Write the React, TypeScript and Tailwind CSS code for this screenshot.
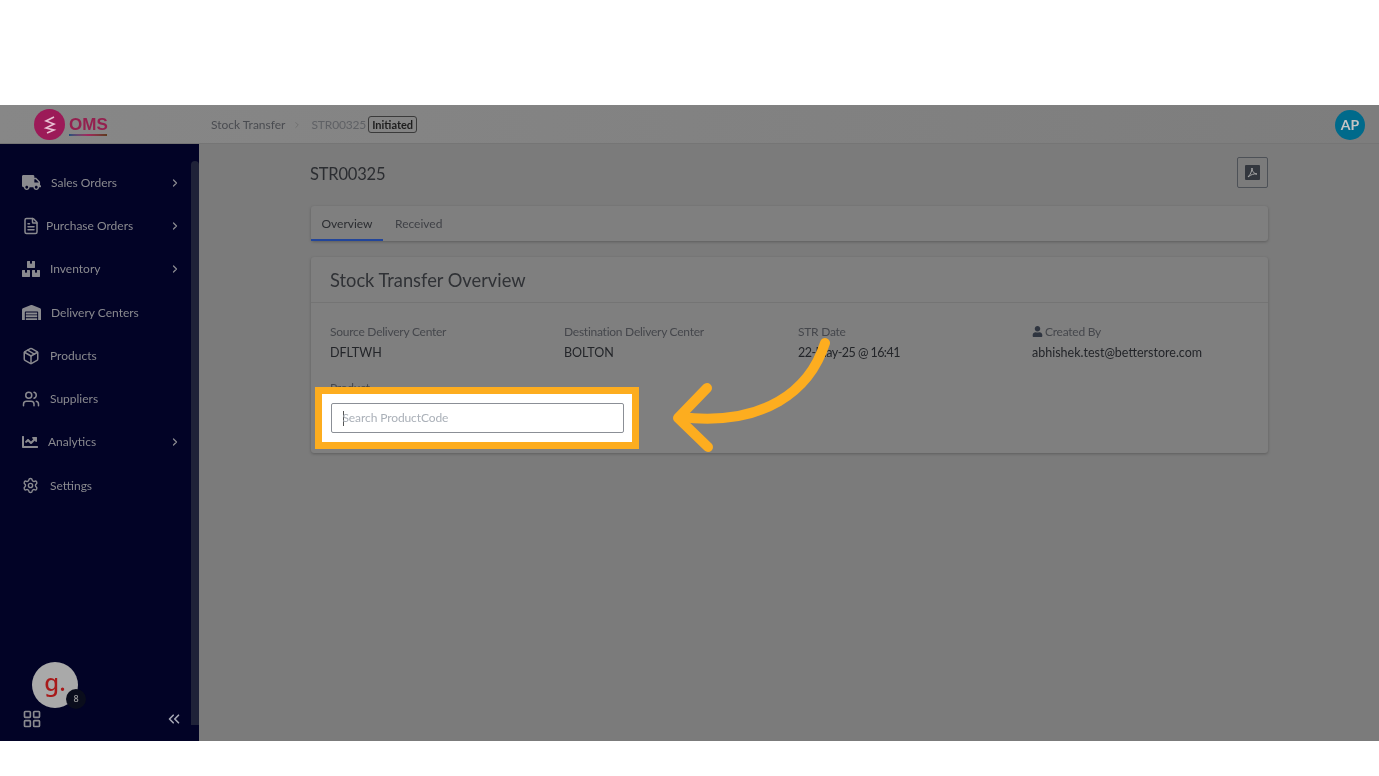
import React from "react";
import { ChevronRight, ChevronsLeft, FileText, LayoutGrid, Package, Settings, Users } from "lucide-react";
import { FaTruck, FaWarehouse, FaUser, FaBoxes, FaChartLine } from "react-icons/fa";

const font = { fontFamily: "Lato, 'Noto Sans', sans-serif" };

type Item = { label: string; icon: React.ReactNode; gap: string; arrow?: boolean };
const items: Item[] = [
  { label: "Sales Orders", icon: <FaTruck size={19} />, gap: "gap-[10px]", arrow: true },
  { label: "Purchase Orders", icon: <FileText size={18} />, gap: "gap-[6px]", arrow: true },
  { label: "Inventory", icon: <FaBoxes size={18} />, gap: "gap-[10px]", arrow: true },
  { label: "Delivery Centers", icon: <FaWarehouse size={19} />, gap: "gap-[10px]" },
  { label: "Products", icon: <Package size={18} />, gap: "gap-[10px]" },
  { label: "Suppliers", icon: <Users size={18} />, gap: "gap-[10px]" },
  { label: "Analytics", icon: <FaChartLine size={16} />, gap: "gap-[10px]", arrow: true },
  { label: "Settings", icon: <Settings size={17} />, gap: "gap-[11px]" },
];

function Detail({ label, value, user, tight }: { label: string; value: string; user?: boolean; tight?: boolean }) {
  return (
    <div className="w-[234px] shrink-0">
      <div className="flex items-center gap-[2px] text-[12px] leading-[17px] tracking-[-0.25px] text-[#45474c]">
        {user && <FaUser size={11} className="text-[#2f3540]" />}
        {label}
      </div>
      <div className={`mt-[4px] text-[12.5px] leading-[18px] text-[#232529] ${tight ? "tracking-[-0.55px]" : ""}`}>{value}</div>
    </div>
  );
}

export default function App() {
  return (
    <div className="relative h-[776px] w-full overflow-hidden bg-white pt-[105px] blur-[0.45px]" style={font}>
      <div className="flex h-[636px] flex-col bg-[#7b7b7b]">
        <header className="flex h-[39px] shrink-0 items-center border-b border-[#757575] bg-gradient-to-r from-[#878787] to-[#7d7d7d] pr-[14px] pt-[1px]">
          <div className="flex w-[211px] shrink-0 items-center pl-[34px]">
            <div className="flex h-[31px] w-[31px] items-center justify-center rounded-full bg-[#9c1a58]">
              <svg width="16" height="20" viewBox="0 0 16 20" fill="none" stroke="#e8c0d2" strokeWidth="1.6">
                <path d="M12 2 L4 6 L12 9 L4 13 L12 15 L5 18" />
              </svg>
            </div>
            <div className="ml-[4px] flex flex-col pt-[2px]">
              <span className="text-[17px] font-black leading-[17px] text-[#94204f]" style={{ fontFamily: "'Liberation Sans', sans-serif" }}>OMS</span>
              <span className="mt-[1px] h-[2px] w-[38px] bg-gradient-to-r from-[#1d4f7c] via-[#a3235c] to-[#5c3a1c]" />
            </div>
          </div>
          <span className="pt-[1px] text-[12px] text-[#4a4c51]">Stock Transfer</span>
          <ChevronRight size={10} className="mx-[7px] text-[#6c6c6c]" />
          <span className="ml-[2px] pt-[1px] text-[12px] tracking-[-0.15px] text-[#5f6165]">STR00325</span>
          <span className="ml-[2px] rounded-[3px] border border-[#3a3a3a] px-[3px] text-[11px] font-bold leading-[15px] text-[#1e1e1e]">Initiated</span>
          <div className="ml-auto flex h-[30px] w-[30px] items-center justify-center rounded-full bg-[#006a8b] text-[14px] font-bold text-[#c4c4c4]">AP</div>
        </header>
        <div className="flex min-h-0 flex-1">
          <aside className="flex w-[199px] shrink-0 bg-[#020326]">
            <div className="flex w-[191px] flex-col pt-[17px] pb-[12px] text-[#8a8a8f]">
              {items.map((it) => (
                <div key={it.label} className={`flex h-[43.3px] items-center pl-[22px] pr-[10px] ${it.gap}`}>
                  {it.icon}
                  <span className="text-[12px]">{it.label}</span>
                  {it.arrow && <ChevronRight size={12} strokeWidth={2.5} className="ml-auto" />}
                </div>
              ))}
              <div className="mt-auto flex flex-col">
                <div className="relative ml-[32px] flex h-[46px] w-[46px] items-center justify-center rounded-full bg-[#a9a9a9] pb-[6px] text-[24px] font-medium text-[#a81a1a]" style={{ fontFamily: "'Noto Sans', sans-serif" }}>
                  g.
                  <span className="absolute left-[34px] top-[27px] flex h-[20px] w-[20px] items-center justify-center rounded-full bg-[#0a0d1c] text-[9px] text-[#a0a0a0]">8</span>
                </div>
                <div className="mt-[1px] flex items-center justify-between pl-[22px] pr-[8px]">
                  <LayoutGrid size={20} />
                  <ChevronsLeft size={18} strokeWidth={2.2} className="text-[#a5a7b5]" />
                </div>
              </div>
            </div>
            <div className="mt-[17px] mb-[16px] w-[8px] rounded-t-[4px] bg-[#1f2238]" />
          </aside>
          <main className="min-w-0 flex-1 pl-[111px] pr-[111px]">
            <div className="flex h-[62px] items-center justify-between pb-[6px]">
              <h1 className="pt-[4px] text-[16.5px] tracking-[-0.2px] text-[#2b2d31]">STR00325</h1>
              <div className="flex h-[31px] w-[31px] items-center justify-center rounded-[2px] border border-[#4d5157]">
                <svg width="15" height="15" viewBox="0 0 15 15">
                  <rect width="15" height="15" rx="1" fill="#33373e" />
                  <path d="M3 12 C6 9 7 5 7 3 C7 6 9 9 12 9 C9 8.5 6 9.5 3 12Z" fill="none" stroke="#a5a5a5" strokeWidth="1" />
                </svg>
              </div>
            </div>
            <div className="ml-[1px] flex h-[35px] w-[957px] items-stretch rounded-[3px] bg-[#7f7f7f] shadow-[0_1px_3px_rgba(0,0,0,0.25)]">
              <div className="flex w-[72px] items-center justify-center border-b-2 border-[#22459a] pt-[2px] text-[12px] text-[#2b2d31]">Overview</div>
              <div className="ml-[12px] flex items-center pt-[1px] text-[12px] text-[#3f4146]">Received</div>
            </div>
            <section className="ml-[1px] mt-[16px] h-[196px] w-[957px] rounded-[3px] bg-[#7f7f7f] shadow-[0_1px_3px_rgba(0,0,0,0.25)]">
              <div className="flex h-[46px] items-center border-b border-[#747474] pl-[19px] pt-[2px] text-[18.3px] text-[#303236]">Stock Transfer Overview</div>
              <div className="flex pl-[19px] pt-[20px]">
                <Detail label="Source Delivery Center" value="DFLTWH" />
                <Detail label="Destination Delivery Center" value="BOLTON" />
                <Detail label="STR Date" value="22-May-25 @ 16:41" tight />
                <Detail label="Created By" value="abhishek.test@betterstore.com" user />
              </div>
              <div className="pl-[19px] pt-[17px]">
                <div className="text-[12px] leading-[17px] tracking-[-0.25px] text-[#45474c]">Product</div>
              </div>
            </section>
          </main>
        </div>
      </div>

      {/* Spotlight over the dimmed page */}
      <div className="absolute left-[315px] top-[387px] flex h-[62px] w-[324px] items-center justify-center border-[7px] border-[#fdad1f] bg-white">
        <div className="flex h-[30px] w-[293px] items-center rounded-[2px] border border-[#8b8f96] pl-[11px] text-[12px] tracking-[-0.1px] text-[#aab0b8]">
          <span className="mr-[-1px] h-[15px] w-px bg-[#555]" />
          Search ProductCode
        </div>
      </div>

      <svg className="absolute left-[660px] top-[330px]" width="180" height="130" viewBox="0 0 180 130" fill="none" stroke="#fdad1f" strokeWidth="10" strokeLinecap="round" strokeLinejoin="round">
        <path d="M165 13 C150 60, 105 97, 20 87" />
        <path d="M47 58 L18 88 L48 117" />
      </svg>
    </div>
  );
}
